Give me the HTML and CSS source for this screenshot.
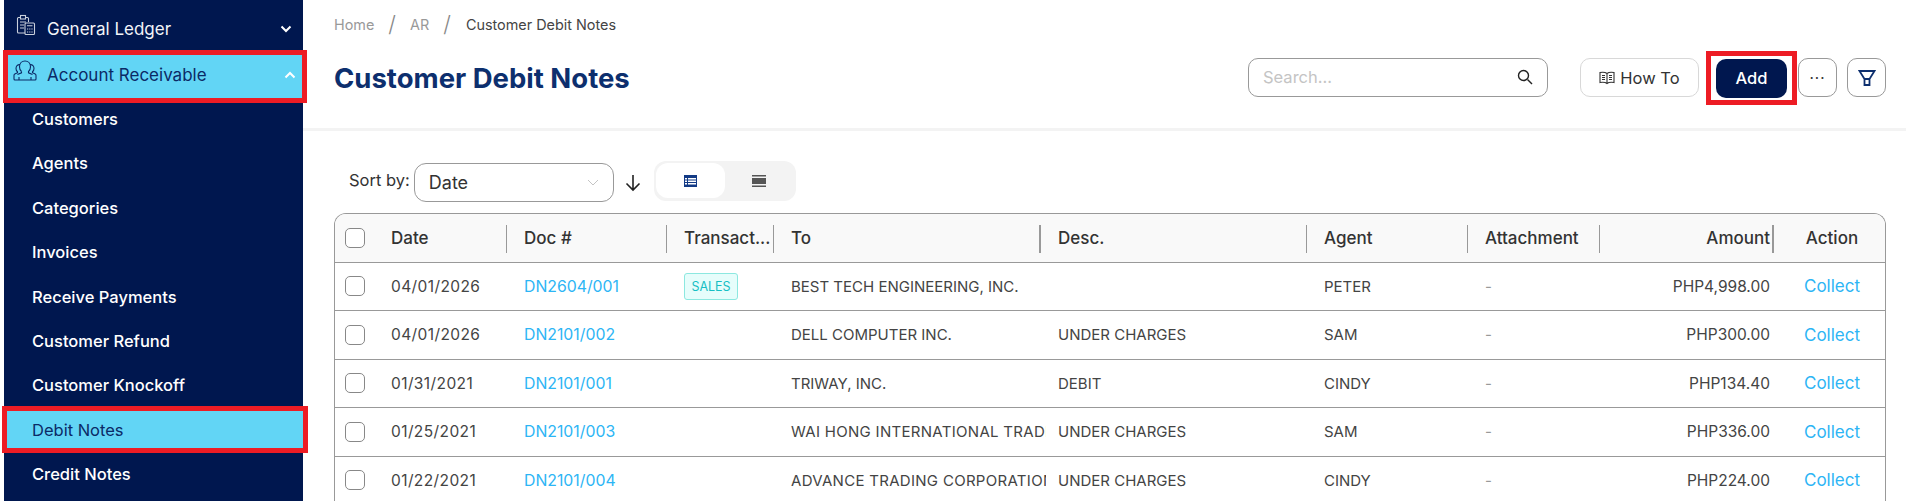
FILE: index.html
```html
<!DOCTYPE html>
<html lang="en">
<head>
    <meta charset="UTF-8">
    <meta name="viewport" content="width=device-width, initial-scale=1.0">
    <title>Customer Debit Notes</title>
    <link rel="stylesheet" href="styles.css">
</head>
<body>
    <aside class="sidebar">
        <div class="menu-head">
            <svg class="menu-icon" width="20" height="22" viewBox="0 0 20 22" fill="none" stroke="#c9d0dc" stroke-width="1.1">
                <path d="M9 19H2.500a1 1 0 0 1-1-1V4.500a1 1 0 0 1 1-1h9a1 1 0 0 1 1 1V8"/>
                <rect x="4.500" y="1.500" width="5" height="3.500" fill="#00174f"/>
                <path d="M4 8h6M4 11h4M4 14h4"/>
                <rect x="9" y="9" width="9.500" height="11.500" rx="1" fill="#00174f"/>
                <path d="M11 11.800h5.500M11 15h1.200M13.200 15h1.200M15.400 15h1.200M11 18h1.200M13.200 18h1.200M15.400 18h1.200"/>
            </svg>
            <span class="menu-title">General Ledger</span>
            <svg class="chevron" width="12" height="8" viewBox="0 0 12 8" fill="none" stroke="#fff" stroke-width="2"><path d="M1.500 1.500 6 6l4.500-4.500"/></svg>
        </div>
        <div class="menu-head open">
            <svg class="menu-icon" width="24" height="22" viewBox="0 0 24 22" fill="none" stroke="#0b2a66" stroke-width="1.100">
                <path d="M8.500 11.500c-1.300-.9-2-2.700-2-4.700C6.500 3.500 8.800 1 12 1s5.500 2.500 5.500 5.800c0 2-.7 3.800-2 4.700v1.300l4 1.700"/>
                <path d="M7 4.600C4.400 4.400 3 6.300 3 8.500c0 1.300.5 2.500 1.500 3.200v1L1.800 14c-.6.300-.8.800-.8 1.400V19c0 .600.500 1 1 1h20c.500 0 1-.4 1-1v-3.600c0-.6-.2-1.100-.8-1.400l-2.700-1.300v-1c1-.7 1.500-1.900 1.500-3.200 0-2.200-1.400-4.100-4-3.900"/>
                <path d="M8.500 11.500v1.300l-4 1.700M6 20v-3M18 20v-3"/>
            </svg>
            <span class="menu-title">Account Receivable</span>
            <svg class="chevron" width="12" height="8" viewBox="0 0 12 8" fill="none" stroke="#fff" stroke-width="2"><path d="M1.500 6.500 6 2l4.500 4.500"/></svg>
        </div>
        <nav class="submenu">
            <a class="sub-item">Customers</a>
            <a class="sub-item">Agents</a>
            <a class="sub-item">Categories</a>
            <a class="sub-item">Invoices</a>
            <a class="sub-item">Receive Payments</a>
            <a class="sub-item">Customer Refund</a>
            <a class="sub-item">Customer Knockoff</a>
            <a class="sub-item active">Debit Notes</a>
            <a class="sub-item">Credit Notes</a>
        </nav>
    </aside>

    <main class="content">
        <header class="page-header">
            <div class="breadcrumb">
                <span>Home</span>
                <span class="slash">/</span>
                <span>AR</span>
                <span class="slash">/</span>
                <span class="current">Customer Debit Notes</span>
            </div>
            <div class="title-row">
                <h1>Customer Debit Notes</h1>
                <div class="search">
                    <span class="search-text">Search...</span>
                    <svg width="16" height="16" viewBox="0 0 16 16" fill="none" stroke="#222" stroke-width="1.400"><circle cx="6.500" cy="6.500" r="5"/><path d="m10.500 10.500 4.500 4.500"/></svg>
                </div>
                <button class="btn how-to">
                    <svg width="16" height="14" viewBox="0 0 16 14" fill="none" stroke="#333" stroke-width="1.100"><path d="M8 2.500C6.500 1.300 3 1.200 1 1.500v10c2-.3 5.500-.2 7 1 1.500-1.200 5-1.300 7-1v-10c-2-.3-5.500-.2-7 1zM8 2.500v10M3 4.500h3M3 6.500h3M3 8.500h3M10 4.500h3M10 6.500h3M10 8.500h3"/></svg>
                    How To
                </button>
                <div class="add-frame">
                    <button class="btn add">Add</button>
                </div>
                <button class="btn square more">···</button>
                <button class="btn square filter">
                    <svg width="18" height="18" viewBox="0 0 18 18" fill="none" stroke="#0d2f6e" stroke-width="1.800"><path d="M1.500 2h15L11.500 10v6h-5v-6zM6.500 10h5"/></svg>
                </button>
            </div>
        </header>

        <section class="list">
            <div class="toolbar">
                <span class="sort-label">Sort by:</span>
                <div class="select">
                    <span>Date</span>
                    <svg width="12" height="7" viewBox="0 0 12 7" fill="none" stroke="#c4c4c4" stroke-width="1"><path d="m1 1 5 5 5-5"/></svg>
                </div>
                <svg class="sort-arrow" width="16" height="18" viewBox="0 0 16 18" fill="none" stroke="#222" stroke-width="1.600"><path d="M8 1v15M1.500 9.500 8 16l6.500-6.500"/></svg>
                <div class="view-toggle">
                    <div class="view-btn selected">
                        <svg width="13" height="12" viewBox="0 0 13 12"><path fill="#123a85" d="M0 0h13v12H0z"/><path fill="#fff" d="M1 3h2v1.500H1zM4 3h8v1.500H4zM1 5.500h2V7H1zM4 5.500h8V7H4zM1 8h2v1.500H1zM4 8h8v1.500H4z"/></svg>
                    </div>
                    <div class="view-btn">
                        <svg width="14" height="12" viewBox="0 0 14 12"><path fill="#555" d="M0 0h14v1.500H0zM0 3h14v6H0zM0 10.500h14V12H0z"/></svg>
                    </div>
                </div>
            </div>

            <div class="table-wrap">
                <table>
                    <colgroup>
                        <col class="c-check"><col class="c-date"><col class="c-doc"><col class="c-trans"><col class="c-to"><col class="c-desc"><col class="c-agent"><col class="c-attach"><col class="c-amount"><col class="c-action">
                    </colgroup>
                    <thead>
                        <tr>
                            <th class="check"><span class="box"></span></th>
                            <th class="split">Date</th>
                            <th class="split">Doc #</th>
                            <th class="split">Transact...</th>
                            <th class="split thick">To</th>
                            <th class="split">Desc.</th>
                            <th class="split">Agent</th>
                            <th class="split">Attachment</th>
                            <th class="split thick right">Amount</th>
                            <th class="center">Action</th>
                        </tr>
                    </thead>
                    <tbody>
                        <tr>
                            <td class="check"><span class="box"></span></td>
                            <td class="date">04/01/2026</td>
                            <td><a class="link">DN2604/001</a></td>
                            <td><span class="tag">SALES</span></td>
                            <td>BEST TECH ENGINEERING, INC.</td>
                            <td></td>
                            <td>PETER</td>
                            <td class="muted">-</td>
                            <td class="right">PHP4,998.00</td>
                            <td class="center"><a class="link collect">Collect</a></td>
                        </tr>
                        <tr>
                            <td class="check"><span class="box"></span></td>
                            <td class="date">04/01/2026</td>
                            <td><a class="link">DN2101/002</a></td>
                            <td></td>
                            <td>DELL COMPUTER INC.</td>
                            <td>UNDER CHARGES</td>
                            <td>SAM</td>
                            <td class="muted">-</td>
                            <td class="right">PHP300.00</td>
                            <td class="center"><a class="link collect">Collect</a></td>
                        </tr>
                        <tr>
                            <td class="check"><span class="box"></span></td>
                            <td class="date">01/31/2021</td>
                            <td><a class="link">DN2101/001</a></td>
                            <td></td>
                            <td>TRIWAY, INC.</td>
                            <td>DEBIT</td>
                            <td>CINDY</td>
                            <td class="muted">-</td>
                            <td class="right">PHP134.40</td>
                            <td class="center"><a class="link collect">Collect</a></td>
                        </tr>
                        <tr>
                            <td class="check"><span class="box"></span></td>
                            <td class="date">01/25/2021</td>
                            <td><a class="link">DN2101/003</a></td>
                            <td></td>
                            <td class="long">WAI HONG INTERNATIONAL TRADING</td>
                            <td>UNDER CHARGES</td>
                            <td>SAM</td>
                            <td class="muted">-</td>
                            <td class="right">PHP336.00</td>
                            <td class="center"><a class="link collect">Collect</a></td>
                        </tr>
                        <tr>
                            <td class="check"><span class="box"></span></td>
                            <td class="date">01/22/2021</td>
                            <td><a class="link">DN2101/004</a></td>
                            <td></td>
                            <td class="long">ADVANCE TRADING CORPORATION</td>
                            <td>UNDER CHARGES</td>
                            <td>CINDY</td>
                            <td class="muted">-</td>
                            <td class="right">PHP224.00</td>
                            <td class="center"><a class="link collect">Collect</a></td>
                        </tr>
                    </tbody>
                </table>
            </div>
        </section>
    </main>
</body>
</html>
```

FILE: styles.css
```css
* {
    box-sizing: border-box;
}
body {
    margin: 0;
    height: 501px;
    overflow: hidden;
    display: flex;
    background-color: #fff;
    font-family: Inter, "Noto Sans", sans-serif;
    font-size: 15px;
    color: #333;
}

/* sidebar */
.sidebar {
    width: 299px;
    margin-left: 4px;
    flex-shrink: 0;
    background-color: #00174f;
}
.menu-head {
    height: 55px;
    padding-top: 2px;
    padding-right: 11px;
    display: flex;
    align-items: center;
    color: #f2f4f8;
    font-size: 17px;
}
.menu-icon {
    margin-left: 12px;
    margin-right: 11px;
    margin-top: -8px;
}
.menu-title {
    flex: 1;
}
.menu-head.open {
    height: 43px;
    margin-left: 4px;
    margin-right: 1px;
    padding-top: 0;
    padding-right: 6px;
    padding-bottom: 3px;
    background-color: #62d5f5;
    color: #0b2a66;
    outline: 5px solid #ed1c24;
}
.menu-head.open .menu-icon {
    margin-left: 5px;
    margin-right: 10px;
}
.submenu {
    display: flex;
    flex-direction: column;
    gap: 7.400px;
    padding-top: 2.500px;
}
.sub-item {
    height: 37px;
    display: flex;
    align-items: center;
    padding-left: 28px;
    color: #fff;
    font-size: 16.500px;
    font-weight: 500;
}
.sub-item.active {
    margin-left: 3px;
    padding-left: 25px;
    background-color: #62d5f5;
    color: #0b2a66;
    font-weight: 400;
    outline: 5px solid #ed1c24;
}

/* header */
.content {
    flex: 1;
    min-width: 0;
}
.page-header {
    height: 131px;
    border-bottom: 3px solid #f3f3f3;
    padding: 0 20px 0 31px;
}
.breadcrumb {
    height: 48px;
    display: flex;
    align-items: center;
    gap: 14px;
    font-size: 14.400px;
    color: #999;
}
.slash {
    font-size: 22px;
    font-weight: 300;
    color: #888;
}
.current {
    color: #444;
    margin-left: 1px;
}
.title-row {
    display: flex;
    align-items: center;
    height: 39px;
    margin-top: 10px;
}
h1 {
    margin: 0;
    flex: 1;
    font-size: 27.500px;
    font-weight: 700;
    color: #0d2f6e;
}
.search {
    width: 300px;
    height: 39px;
    margin-right: 32px;
    padding: 0 14px 2px;
    display: flex;
    align-items: center;
    justify-content: space-between;
    border: 1px solid #999;
    border-radius: 10px;
}
.search-text {
    font-size: 16.500px;
    color: #c4c4c4;
}
.btn {
    height: 39px;
    border-radius: 10px;
    background-color: #fff;
    border: 1px solid #d8d8d8;
    font-family: inherit;
    font-size: 16.500px;
    color: #333;
    padding: 0;
    display: flex;
    align-items: center;
    justify-content: center;
}
.how-to {
    width: 119px;
    gap: 5px;
}
.add-frame {
    width: 91px;
    height: 54px;
    margin-left: 7px;
    padding: 3px 5px;
    border: 5px solid #ed1c24;
    background-color: #fff;
}
.add {
    width: 71px;
    background-color: #00174f;
    border: none;
    color: #fff;
    font-weight: 500;
}
.square {
    width: 39px;
    border-color: #999;
}
.more {
    margin-left: 1px;
    font-size: 15px;
    letter-spacing: 1px;
}
.filter {
    margin-left: 10px;
}

/* toolbar */
.list {
    padding: 30px 20px 0 31px;
}
.toolbar {
    height: 40px;
    display: flex;
    align-items: center;
    padding-left: 15px;
    margin-bottom: 12px;
}
.sort-label {
    font-size: 16.500px;
    margin-right: 4px;
    margin-top: -3px;
}
.select {
    width: 200px;
    height: 39px;
    padding: 0 14px;
    margin-top: 3px;
    display: flex;
    align-items: center;
    justify-content: space-between;
    border: 1px solid #999;
    border-radius: 12px;
    font-size: 18px;
}
.sort-arrow {
    margin: 3px 13px 0 11px;
}
.view-toggle {
    width: 142px;
    height: 40px;
    padding: 2px;
    display: flex;
    border-radius: 12px;
    background-color: #f3f3f3;
}
.view-btn {
    width: 69px;
    height: 35px;
    display: flex;
    align-items: center;
    justify-content: center;
    border-radius: 12px;
}
.view-btn.selected {
    background-color: #fff;
}

/* table */
.table-wrap {
    border: 1px solid #999;
    border-bottom: none;
    border-radius: 12px 12px 0 0;
    overflow: hidden;
}
table {
    width: 1550px;
    table-layout: fixed;
    border-collapse: collapse;
}
.c-check { width: 44px; }
.c-date { width: 133px; }
.c-doc { width: 160px; }
.c-trans { width: 107px; }
.c-to { width: 267px; }
.c-desc { width: 266px; }
.c-agent { width: 161px; }
.c-attach { width: 132px; }
.c-amount { width: 174px; }
.c-action { width: 106px; }
th, td {
    padding: 0 0 0 12px;
    text-align: left;
    white-space: nowrap;
    overflow: hidden;
}
th {
    height: 48px;
    position: relative;
    background-color: #f9f9f9;
    border-bottom: 1px solid #999;
    font-size: 17px;
    font-weight: 500;
}
td {
    height: 48.500px;
    border-bottom: 1px solid #999;
    font-size: 15px;
    color: #444;
}
td.date {
    font-size: 15.500px;
    letter-spacing: .4px;
}
td.long {
    letter-spacing: .3px;
}
td.right {
    font-size: 15.500px;
}
th.split::after {
    content: "";
    position: absolute;
    right: 5px;
    top: 11px;
    height: 28px;
    width: 1px;
    background-color: #999;
}
th.split.thick::after {
    width: 2px;
}
.check {
    padding-left: 10px;
}
.box {
    display: block;
    width: 20px;
    height: 20px;
    border: 1px solid #888;
    border-radius: 5px;
    background-color: #fff;
}
th.right, td.right {
    padding: 0 9px 0 0;
    text-align: right;
}
th.center, td.center {
    padding: 0;
    text-align: center;
}
.link {
    color: #2db5f5;
    font-size: 15.800px;
}
.collect {
    font-size: 17px;
}
.muted {
    color: #999;
}
.tag {
    display: flex;
    align-items: center;
    justify-content: center;
    width: 54px;
    height: 27px;
    background-color: #e6fdfb;
    border: 1px solid #8ce8e0;
    border-radius: 3px;
    font-size: 12.500px;
    color: #17bfc4;
}
```
